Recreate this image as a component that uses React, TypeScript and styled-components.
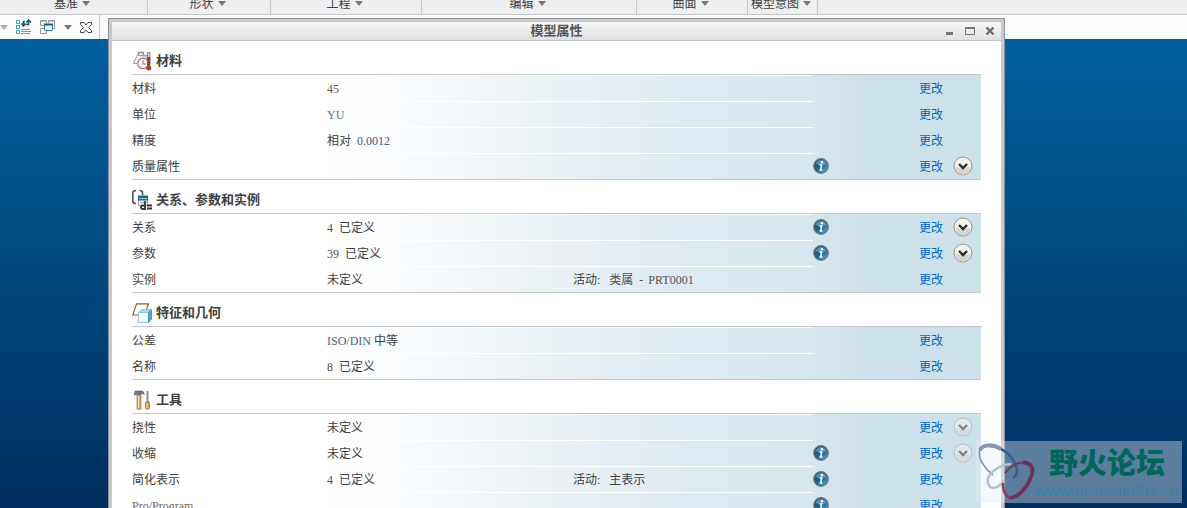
import React from "react";
import styled, { createGlobalStyle } from "styled-components";

const Global = createGlobalStyle`
  * { box-sizing: border-box; }
  html, body, #root { height: 100%; margin: 0; }
  body {
    overflow: hidden;
    font: 12px/14px "Liberation Serif", "Noto Sans CJK SC", sans-serif;
    color: #404040;
  }
  button {
    display: flex;
    align-items: center;
    justify-content: center;
    padding: 0;
    border: 0;
    background: none;
    font: inherit;
    color: inherit;
    cursor: pointer;
  }
  svg { display: block; flex: none; }
`;

const Page = styled.div`
  position: relative;
  display: flex;
  flex-direction: column;
  height: 100%;
  overflow: hidden;
`;

const Ribbon = styled.nav`
  display: flex;
  flex: none;
  height: 15px;
  overflow: hidden;
  background: #eeeff1;
  border-bottom: 1px solid #c6c8ca;
`;

const RibbonGroup = styled.button<{ $width: number }>`
  && {
    flex: none;
    align-items: flex-end;
    gap: 4px;
    width: ${(p) => p.$width}px;
    padding-right: 3px;
    padding-bottom: 3px;
    border-right: 1px solid #c9cbcd;
  }
  svg { margin-bottom: 5px; }
`;

const Toolbar = styled.div`
  display: flex;
  flex: none;
  height: 24px;
  background: #fbfbfb;
`;

const ToolGroup = styled.div`
  display: flex;
  align-items: center;
  width: 100px;
  gap: 8px;
  border-right: 1px solid #c6c8ca;
`;

const Viewport = styled.div`
  flex: 1;
  background: linear-gradient(#005f9e, #004b82 45%, #002e5e);
`;

const Dialog = styled.section`
  position: absolute;
  top: 18px;
  left: 108px;
  right: 182px;
  background: #fff;
  border: 1px solid #8f9194;
  box-shadow: inset 0 0 0 3px #c5c9cd;
  padding: 3px;
`;

const TitleBar = styled.header`
  display: grid;
  grid-template-columns: 1fr auto 1fr;
  align-items: center;
  height: 19px;
  background: linear-gradient(#f6f7f7, #dee0e2);
  border-bottom: 1px solid #c5c8ca;
`;

const Title = styled.h1`
  grid-column: 2;
  margin: 0;
  font-size: 13px;
  line-height: 16px;
  color: #555;
`;

const WindowButtons = styled.div`
  display: flex;
  justify-content: flex-end;
  gap: 8px;
  padding-right: 5px;
`;

const Body = styled.div`
  padding: 0 20px;
`;

const SectionTitle = styled.h2`
  display: flex;
  align-items: center;
  gap: 4px;
  height: 33px;
  margin: 0;
  padding-top: 7px;
  font-size: 13px;
  line-height: 16px;
`;

const Rows = styled.div`
  border: solid #c5c8ca;
  border-width: 1px 0;
  background: linear-gradient(
    90deg, #fff 195px, #fafcfe 30%, #ebf2f5 48%, #e6eef5 57%,
    #deeaf2 65%, #d9e8ef 78%, #cde1ea 87%
  );
`;

const Row = styled.div`
  display: grid;
  grid-template-columns: 195px 246px minmax(0, 1fr) 106px 34px 28px;
  height: 26px;
  align-items: center;
  white-space: nowrap;
`;

const Label = styled.div`
  padding-top: 2px;
`;

const Value = styled.div`
  align-self: stretch;
  padding-top: 6px;
  border-top: 1px solid #fff;
`;

const Latin = styled.span<{ $tone?: string; $gap?: number }>`
  color: ${(p) => p.$tone || "#505058"};
  margin-right: ${(p) => p.$gap || 0}px;
`;

const ChangeLink = styled.a`
  padding-top: 2px;
  color: #0068c8;
  text-decoration: none;
`;

const ExpandButton = styled.button`
  justify-self: start;
`;

const Watermark = styled.aside`
  position: absolute;
  right: 5px;
  bottom: 5px;
  display: flex;
  width: 206px;
  height: 62px;
  background: rgba(230, 238, 248, 0.4);
  pointer-events: none;
`;

const WatermarkText = styled.div`
  display: flex;
  flex-direction: column;
  align-items: center;
  width: 146px;
`;

const ForumName = styled.strong`
  font: 900 29px/40px "Noto Sans CJK SC", sans-serif;
  color: #00665c;
`;

const ForumUrl = styled.span`
  font: 15px/18px "Noto Sans", sans-serif;
  color: #3a82a8;
`;

const Arrow = ({ tone = "#77797c" }: { tone?: string }) => (
  <svg width="8" height="5" viewBox="0 0 8 5">
    <path d="M0 0h8L4 5z" fill={tone} />
  </svg>
);

const TreeIcon = () => (
  <svg width="16" height="16" viewBox="0 0 16 16" fill="none">
    <path d="M.5 1.500h3v3h-3zM.5 6.500h3v3h-3zM.5 11.500h3v3h-3z" stroke="#3d9cc4" />
    <path d="M5 10.500h9M5 12.500h10M5 14.500h9" stroke="#8b8d90" />
    <path d="M9 2.500H7.500V6M5.500 4.500l2 2.500 2-2.500M10 5.500h2.500V2M10.500 3.500l2-2.500 2.500 2.500" stroke="#17577a" strokeWidth="1.600" />
  </svg>
);

const WindowsIcon = () => (
  <svg width="16" height="16" viewBox="0 0 16 16" fill="none">
    <path d="M4 6.500H.5v-5h6V4M8.500 4V1.500h6v8H13M4 9.500H.5v5h6V12" stroke="#929497" />
    <path d="M1 2.500h5M9 2.500h5" stroke="#c4c6c8" />
    <rect x="4.500" y="5.500" width="8" height="6" rx="1" fill="#eaf5fa" stroke="#1c6f99" />
    <path d="M4 5.500h9" stroke="#17577a" strokeWidth="2" />
  </svg>
);

const CloseOutline = () => (
  <svg width="12" height="11" viewBox="0 0 12 11">
    <path d="M.5.500h3.500L6 3 8 .500h3.500V2.500L8.500 5.500l3 3v2H8L6 8l-2 2.500H.5v-2l3-3-3-3z" fill="#fff" stroke="#4a4c4e" />
  </svg>
);

const MaterialIcon = () => (
  <svg width="20" height="20" viewBox="0 0 20 20">
    <path d="M1.500 12.500 5 4.500h10v8z" fill="#d3d4d6" stroke="#a0a2a4" />
    <path d="M2.500 12 5.500 5H10L5 12z" fill="#f8f8f8" />
    <path d="M6.500 4V1.500h5V4" fill="none" stroke="#8a8c8e" strokeWidth="1.300" />
    <circle cx="11" cy="12.500" r="5.200" fill="#fff" stroke="#b07a70" strokeWidth="1.300" />
    <path d="M11 9v4h3" fill="none" stroke="#7d6a68" />
    <path d="M15.500 1.500h2.500V14h-2.500z" fill="#e4e4e4" stroke="#7d7f82" />
    <path d="M15.500 6h2.500v10h-2.500z" fill="#a5301f" />
    <circle cx="16.800" cy="17" r="2.500" fill="#b33a2e" />
  </svg>
);

const RelationsIcon = () => (
  <svg width="20" height="20" viewBox="0 0 20 20">
    <path d="M4 .800H3Q.8.800.8 3v8q0 2.500 2.200 2.500h1M7.500.800h1q2 0 2 2.200v2" fill="none" stroke="#4b4d50" strokeWidth="1.600" />
    <rect x="6.500" y="5.500" width="9" height="10" fill="#f4f5f6" stroke="#a5a7a9" />
    <path d="M6 6h10v4.500H6z" fill="#17688f" />
    <path d="M7 8.500h8" stroke="#9ad6ee" />
    <path d="M8 12.500h7" stroke="#a8aaac" />
    <path d="M13 11v9M13 19h-2.500Q9 19 9 17.500v-.500q0-1.500 1.500-1.500H13M15 15.500h5M15 18.500h5" fill="none" stroke="#343638" strokeWidth="1.800" />
  </svg>
);

const GeometryIcon = () => (
  <svg width="20" height="20" viewBox="0 0 20 20">
    <path d="M4.500.800h12L12.500 12H.800z" fill="#fff" stroke="#846332" strokeWidth="1.200" />
    <path d="M6.500 9.500l3-3h10l-3 3z" fill="#a9dbeb" />
    <path d="M6.500 9.500h10v10h-10z" fill="#f4fbfe" stroke="#8cc8de" />
    <path d="M16.500 9.500l3-3v9.500l-3 3.500z" fill="#55a9cb" stroke="#4697bb" />
    <path d="M6.500 9.500l3.500-3h9.500" fill="none" stroke="#84c8df" />
  </svg>
);

const ToolsIcon = () => (
  <svg width="20" height="20" viewBox="0 0 20 20">
    <path d="M3 1h6.500q2.500 0 2.800 3.500-1.800-1.500-3.300-1v1.500H5V4L2 5z" fill="#777985" stroke="#555762" strokeWidth=".6" />
    <path d="M5 5h4v14q-2 1-4 0z" fill="#d8ab62" stroke="#98713a" strokeWidth=".7" />
    <path d="M6.500 6v12" stroke="#f5dca8" />
    <path d="M14.500 1h2v11h-2z" fill="#8d909a" />
    <path d="M13.500 12h4v6.500q-2 1.500-4 0z" fill="#d2a052" stroke="#8d6732" strokeWidth=".7" />
    <path d="M15 13v5" stroke="#f5dca8" />
  </svg>
);

const InfoIcon = () => (
  <svg width="16" height="16" viewBox="0 0 16 16">
    <defs>
      <linearGradient id="infoFill" x1="0" y1="0" x2="1" y2="1">
        <stop offset="0" stopColor="#174a6b" />
        <stop offset=".5" stopColor="#1f668f" />
        <stop offset="1" stopColor="#62acd0" />
      </linearGradient>
    </defs>
    <circle cx="8" cy="8" r="7.300" fill="url(#infoFill)" stroke="#6d7880" strokeWidth="1.200" />
    <path d="M2.500 6Q4 2 8 2t5.500 4Q8 8 2.500 6" fill="#8fc0da" opacity=".5" />
    <circle cx="9" cy="4.300" r="1.200" fill="#fff" />
    <path d="M6.500 7h2.200L7.700 11.800M6.500 12h3" fill="none" stroke="#fff" strokeWidth="1.500" />
  </svg>
);

const ChevronIcon = ({ muted }: { muted?: boolean }) => (
  <svg width="20" height="20" viewBox="0 0 20 20">
    <circle cx="10" cy="10" r="9" fill={muted ? "#e3e8ea" : "#f4f3ed"} stroke={muted ? "#b5babd" : "#96938d"} />
    <path d="M2.500 11q7.500 2 15 0a7.500 7.500 0 0 1-15 0" fill={muted ? "#d6dcdf" : "#d5d4d0"} />
    <path d="M6 8l4 4 4-4" fill="none" stroke={muted ? "#7e8386" : "#2a2a2a"} strokeWidth="2.400" />
  </svg>
);

const ForumLogo = () => (
  <svg width="58" height="62" viewBox="0 0 58 62" fill="none" overflow="visible">
    <path d="M17 34C9 28 1 17 4 9" stroke="#7d97b2" strokeWidth="1.600" />
    <path d="M4 9C8 1 25 5 34 15c7 8 10 17 3 22" stroke="#33608f" strokeWidth="2.600" />
    <path d="M4 9C7 3 17 3 25 8" stroke="#8299b0" strokeWidth="4" />
    <path d="M35 23C21 24 10 34 12 42c2 8 12 5 16-3" stroke="#b3c1cd" strokeWidth="2.600" />
    <path d="M29 32c5-7 14-12 22-10" stroke="#6e3a66" strokeWidth="2" />
    <path d="M47 21.500c9 0 12 7 7 17C49 50 39 58 33 56.500" stroke="#6e2f5c" strokeWidth="3.800" />
    <path d="M35 57C29 56 27 50 27 42" stroke="#8b3562" strokeWidth="2.400" />
  </svg>
);

const groups = [
  { label: "基准", width: 148 },
  { label: "形状", width: 123 },
  { label: "工程", width: 151 },
  { label: "编辑", width: 215 },
  { label: "曲面", width: 111 },
  { label: "模型意图", width: 70 },
];

type Item = {
  label: React.ReactNode;
  value?: React.ReactNode;
  active?: React.ReactNode;
  info?: boolean;
  expand?: "on" | "muted";
};

const defined = (count: string) => (
  <><Latin $gap={3}>{count}</Latin> 已定义</>
);

const sections: { title: string; icon: React.ReactNode; items: Item[] }[] = [
  {
    title: "材料",
    icon: <MaterialIcon />,
    items: [
      { label: "材料", value: <Latin $tone="#6b5548">45</Latin> },
      { label: "单位", value: <Latin $tone="#4a7394">YU</Latin> },
      { label: "精度", value: <>相对<Latin $gap={3} /> <Latin $tone="#3f5c86">0.0012</Latin></> },
      { label: "质量属性", info: true, expand: "on" },
    ],
  },
  {
    title: "关系、参数和实例",
    icon: <RelationsIcon />,
    items: [
      { label: "关系", value: defined("4"), info: true, expand: "on" },
      { label: "参数", value: defined("39"), info: true, expand: "on" },
      {
        label: "实例",
        value: "未定义",
        active: <>活动:<Latin $gap={6} /> <Latin $gap={3}>类属</Latin> <Latin $gap={2}>-</Latin> <Latin>PRT0001</Latin></>,
      },
    ],
  },
  {
    title: "特征和几何",
    icon: <GeometryIcon />,
    items: [
      { label: "公差", value: <><Latin $tone="#4a6580">ISO/DIN</Latin> 中等</> },
      { label: "名称", value: defined("8") },
    ],
  },
  {
    title: "工具",
    icon: <ToolsIcon />,
    items: [
      { label: "挠性", value: "未定义", expand: "muted" },
      { label: "收缩", value: "未定义", info: true, expand: "muted" },
      { label: "简化表示", value: defined("4"), active: <>活动:<Latin $gap={6} /> 主表示</>, info: true },
      { label: <Latin $tone="#7a624c">Pro/Program</Latin>, info: true },
    ],
  },
];

export default function App() {
  return (
    <Page>
      <Global />
      <Ribbon>
        {groups.map((g) => (
          <RibbonGroup key={g.label} $width={g.width}>
            {g.label}
            <Arrow />
          </RibbonGroup>
        ))}
      </Ribbon>
      <Toolbar>
        <ToolGroup>
          <button aria-label="更多"><Arrow tone="#a9abad" /></button>
          <button aria-label="模型树"><TreeIcon /></button>
          <button aria-label="窗口"><WindowsIcon /></button>
          <button aria-label="窗口列表"><Arrow /></button>
          <button aria-label="关闭窗口"><CloseOutline /></button>
        </ToolGroup>
      </Toolbar>
      <Viewport />
      <Dialog aria-label="模型属性">
        <TitleBar>
          <Title>模型属性</Title>
          <WindowButtons>
            <button aria-label="最小化">
              <svg width="12" height="10" viewBox="0 0 12 10"><path d="M2 6h7v3H2z" fill="#737578" /></svg>
            </button>
            <button aria-label="最大化">
              <svg width="12" height="10" viewBox="0 0 12 10">
                <path d="M1.500 1.500h9v7h-9z" fill="none" stroke="#737578" />
                <path d="M1 2h10" stroke="#737578" strokeWidth="2" />
              </svg>
            </button>
            <button aria-label="关闭">
              <svg width="12" height="10" viewBox="0 0 12 10"><path d="M2.500 1.500l7 7M9.500 1.500l-7 7" stroke="#6b6d70" strokeWidth="2.400" /></svg>
            </button>
          </WindowButtons>
        </TitleBar>
        <Body>
          {sections.map((s) => (
            <React.Fragment key={s.title}>
              <SectionTitle>{s.icon}{s.title}</SectionTitle>
              <Rows>
                {s.items.map((item, i) => (
                  <Row key={i}>
                    <Label>{item.label}</Label>
                    <Value>{item.value}</Value>
                    <Value>{item.active}</Value>
                    <div>{item.info && <button aria-label="信息"><InfoIcon /></button>}</div>
                    <ChangeLink href="#">更改</ChangeLink>
                    {item.expand && (
                      <ExpandButton aria-label="展开" disabled={item.expand === "muted"}>
                        <ChevronIcon muted={item.expand === "muted"} />
                      </ExpandButton>
                    )}
                  </Row>
                ))}
              </Rows>
            </React.Fragment>
          ))}
        </Body>
      </Dialog>
      <Watermark>
        <ForumLogo />
        <WatermarkText>
          <ForumName>野火论坛</ForumName>
          <ForumUrl>www.proewildfire.cn</ForumUrl>
        </WatermarkText>
      </Watermark>
    </Page>
  );
}
